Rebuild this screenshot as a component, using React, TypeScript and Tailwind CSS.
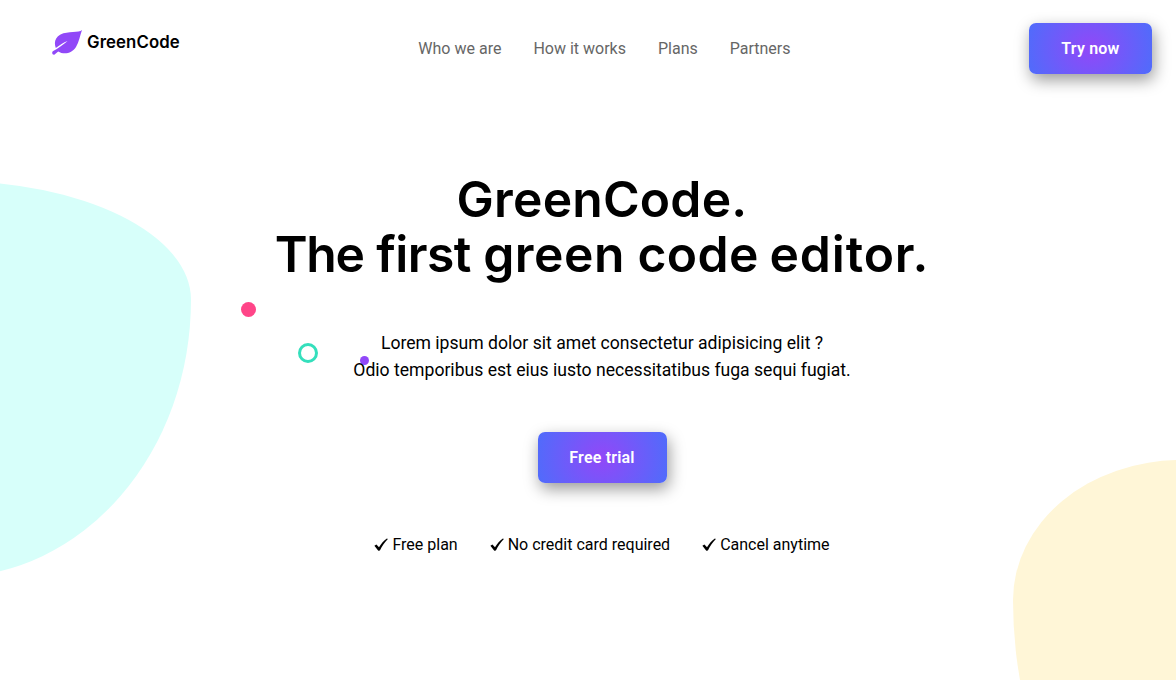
import React from "react";

const links = ["Who we are", "How it works", "Plans", "Partners"];
const perks = ["Free plan", "No credit card required", "Cancel anytime"];

function Leaf() {
  return (
    <svg viewBox="0 0 30 25" className="h-[25px] w-[30px]" fill="#9148f8">
      <path d="M30 0C27 3.2 16 .8 8.5 4.4C2.8 7.4 1.9 13 3.8 17.9C7.5 15.2 11.5 12.4 15.6 10.9C12 14.2 6 18.3 .8 21.2C-.7 22.6.8 25.4 2.6 24.5L6.2 21.4C12 25 20 23.4 24 17C27 12 28 5.5 30 0Z" />
    </svg>
  );
}

function Check() {
  return (
    <svg viewBox="0 0 14 14" className="h-3.5 w-3.5" fill="#000">
      <path d="M.4 7.8L2.4 6.4L5 9.2C7.1 5.6 9.8 2.6 12.9.4L13.9 1.1C10.8 4.2 8 8.1 5.9 12.4L4.3 12.8Z" />
    </svg>
  );
}

function GradientButton({ children, className }: { children: React.ReactNode; className: string }) {
  return (
    <button
      className={`h-[51px] rounded-[7px] bg-[radial-gradient(circle,#9148f8_0%,#4f6cfb_100%)] text-base font-semibold tracking-[0.2px] text-white shadow-[2px_6px_16px_rgba(0,0,0,0.4)] ${className}`}
    >
      {children}
    </button>
  );
}

export default function App() {
  return (
    <div className="relative h-[680px] w-full overflow-hidden bg-white font-['Roboto',sans-serif] text-black">
      <div className="absolute top-[181px] left-[-209px] h-[396px] w-[400px] rounded-[30%_60%_60%_30%/30%_30%_70%_70%] bg-[#d7fffa]" />
      <div className="absolute top-[460px] left-[1013px] h-[400px] w-[400px] rounded-[42%_58%_64%_36%/35%_30%_70%_65%] bg-[#fff6d7]" />
      <div className="absolute top-[302px] left-[241px] h-[15px] w-[15px] rounded-full bg-[#ff4588]" />
      <div className="absolute top-[343px] left-[298px] h-5 w-5 rounded-full border-3 border-[#34dfbc]" />
      <div className="absolute top-[356px] left-[360px] h-[9px] w-[9px] rounded-full bg-[#9148f8]" />

      <header className="relative flex h-24 items-center justify-between pr-6 pl-[52px]">
        <div className="mb-3 flex items-center gap-[5px]">
          <Leaf />
          <span className="font-['Inter',sans-serif] text-[16.8px] leading-6 font-semibold tracking-[0.1px]">GreenCode</span>
        </div>
        <nav className="flex gap-8 pt-0.5 text-base text-[#666]">
          {links.map((l) => (
            <a key={l}>{l}</a>
          ))}
        </nav>
        <GradientButton className="w-[123px] pt-0.5">Try now</GradientButton>
      </header>

      <main className="relative flex flex-col items-center pt-[76px] pl-7 text-center">
        <h1 className="font-['Inter',sans-serif] text-[49.8px] leading-[55px] font-semibold">
          <span className="block tracking-[0.2px]">GreenCode.</span>
          <span className="block">
            <span className="tracking-[-1.3px]">The</span> <span className="tracking-[-0.6px]">first</span>{" "}
            <span className="tracking-[0.5px]">green</span> <span className="tracking-[0.4px]">code</span>{" "}
            <span className="-ml-0.5 tracking-[0.9px]">editor.</span>
          </span>
        </h1>
        <p className="mt-12 text-[17.6px] leading-[27px]">
          Lorem ipsum dolor sit amet consectetur adipisicing elit ?<br />
          Odio temporibus est eius iusto necessitatibus fuga sequi fugiat.
        </p>
        <GradientButton className="mt-12 w-[129px]">Free trial</GradientButton>
        <ul className="mt-[50px] flex gap-8 text-base">
          {perks.map((p) => (
            <li key={p} className="flex items-center gap-1">
              <Check />
              {p}
            </li>
          ))}
        </ul>
      </main>
    </div>
  );
}
